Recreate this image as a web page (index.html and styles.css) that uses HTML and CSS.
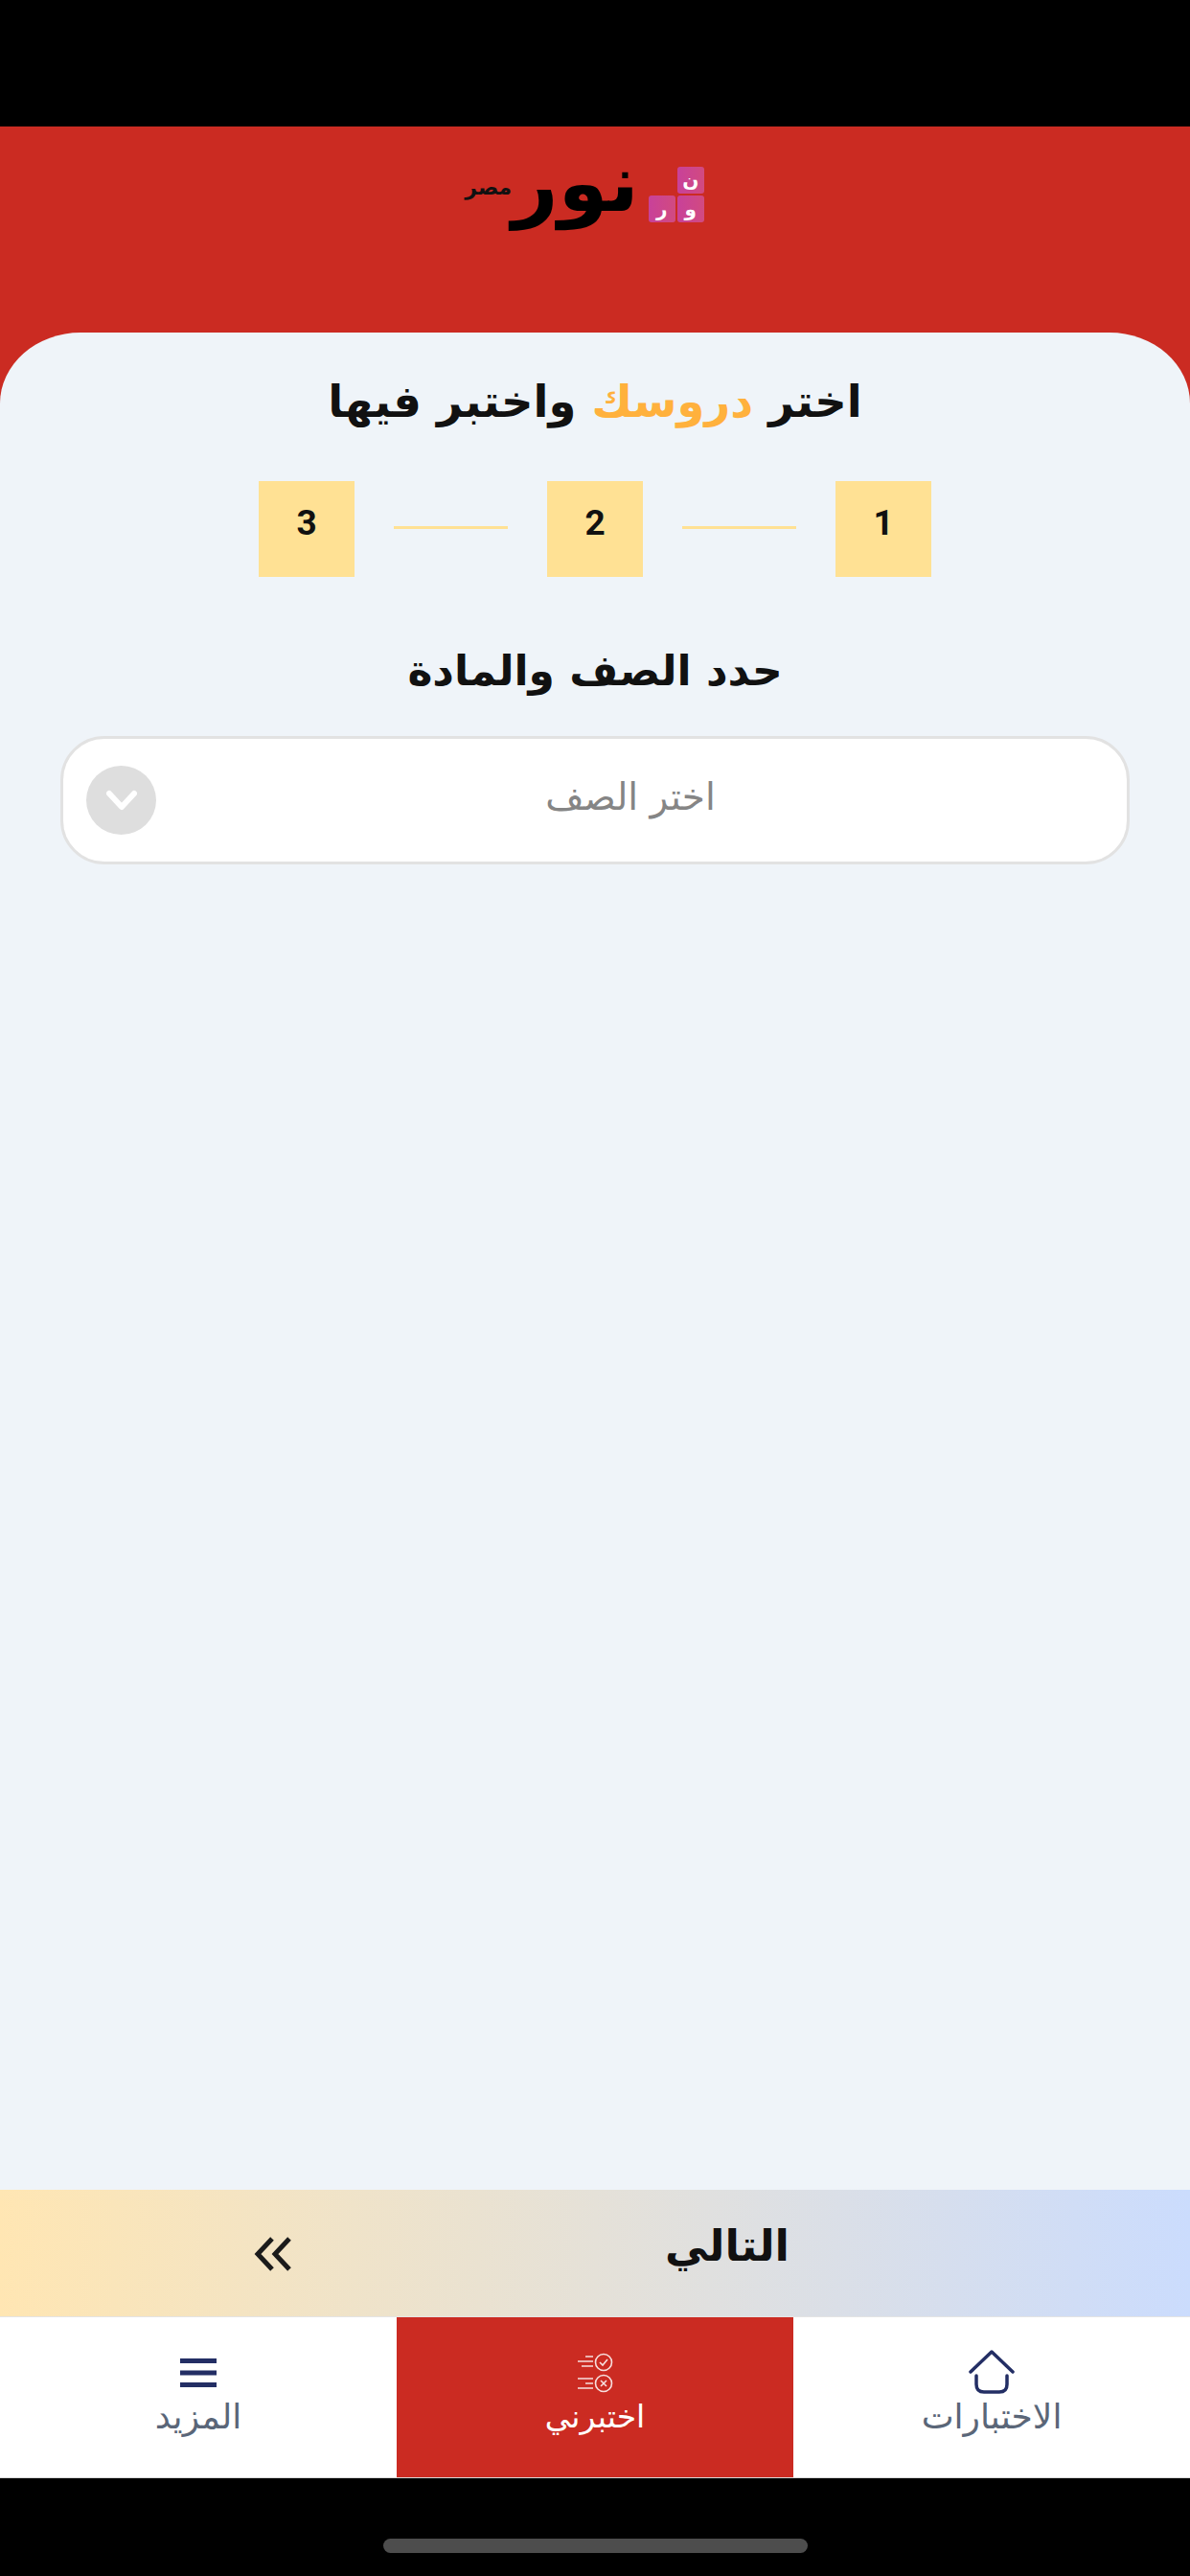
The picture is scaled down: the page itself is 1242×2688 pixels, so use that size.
FILE: index.html
```html
<!DOCTYPE html>
<html lang="ar" dir="rtl">
<head>
  <meta charset="UTF-8">
  <meta name="viewport" content="width=device-width, initial-scale=1.0">
  <title>نور مصر</title>
  <link rel="stylesheet" href="styles.css">
</head>
<body>
  <div class="status-bar"></div>
  <div class="red-area">
    <header class="header">
      <div class="logo" dir="ltr">
        <span class="logo-small">مصر</span>
        <span class="logo-name">نور</span>
        <div class="tiles">
          <span class="tile tile-empty"></span>
          <span class="tile">ن</span>
          <span class="tile">ر</span>
          <span class="tile">و</span>
        </div>
      </div>
    </header>
    <main class="card">
      <h1 class="title">اختر <span class="accent">دروسك</span> واختبر فيها</h1>
      <div class="steps">
        <div class="step">1</div>
        <div class="step-line"></div>
        <div class="step">2</div>
        <div class="step-line"></div>
        <div class="step">3</div>
      </div>
      <h2 class="subtitle">حدد الصف والمادة</h2>
      <div class="select">
        <span class="select-text">اختر الصف</span>
        <span class="select-arrow">
          <svg width="36" height="24" viewBox="0 0 36 24"><path d="M5 5 L18 19 L31 5" fill="none" stroke="#fff" stroke-width="6" stroke-linecap="round" stroke-linejoin="round"/></svg>
        </span>
      </div>
    </main>
  </div>
  <div class="next-bar">
    <span class="next-text">التالي</span>
    <svg class="next-icon" width="42" height="36" viewBox="0 0 42 36"><path d="M20 2 L5 18 L20 34 M38 2 L23 18 L38 34" fill="none" stroke="#1b1b1b" stroke-width="5"/></svg>
  </div>
  <nav class="tabs">
    <div class="tab">
      <svg class="tab-icon" width="50" height="46" viewBox="0 0 50 46"><path d="M3 23 L25 2 L47 23 M9 27 V36 Q9 44 17 44 H33 Q41 44 41 36 V27" fill="none" stroke="#232e64" stroke-width="3.5" stroke-linecap="round" stroke-linejoin="round"/></svg>
      <span>الاختبارات</span>
    </div>
    <div class="tab tab-active">
      <svg class="tab-icon" width="40" height="46" viewBox="0 -3 40 46"><g fill="none" stroke="#fff" stroke-width="1.6" opacity="0.85"><circle cx="29" cy="10" r="8.5"/><path d="M25 10 L28 13 L33 7"/><circle cx="29" cy="32" r="8.5"/><path d="M26 29 L32 35 M32 29 L26 35"/><path d="M10 4 H18 M2 9 H18 M6 14 H18 M2 27 H18 M10 32 H18 M2 37 H18"/></g></svg>
      <span>اختبرني</span>
    </div>
    <div class="tab">
      <svg class="tab-icon" width="40" height="46" viewBox="0 0 40 46"><path d="M1 11.5 H39 M1 24 H39 M1 36.5 H39" stroke="#232e64" stroke-width="5"/></svg>
      <span>المزيد</span>
    </div>
  </nav>
  <div class="home-area">
    <div class="home-indicator"></div>
  </div>
</body>
</html>
```

FILE: styles.css
```css
* {
  box-sizing: border-box;
}

body {
  margin: 0;
  width: 1242px;
  height: 2688px;
  display: flex;
  flex-direction: column;
  background: #000;
  font-family: "DejaVu Sans", sans-serif;
  overflow: hidden;
}

.status-bar {
  height: 132px;
  background: #000;
}

.red-area {
  flex: 1;
  display: flex;
  flex-direction: column;
  background: #cb2b22;
}

.header {
  height: 215px;
  padding-top: 20px;
}

.logo {
  display: flex;
  align-items: center;
  justify-content: center;
  height: 78px;
  padding-right: 22px;
}

.logo-small {
  font-size: 22px;
  font-weight: bold;
  color: #111;
  margin-top: 8px;
}

.logo-name {
  font-size: 84px;
  font-weight: bold;
  line-height: 78px;
  color: #000;
  margin-right: 10px;
}

.tiles {
  display: grid;
  grid-template-columns: 28px 28px;
  grid-auto-rows: 28px;
  gap: 2px;
  margin-top: 24px;
}

.tile {
  display: flex;
  align-items: center;
  justify-content: center;
  background: linear-gradient(90deg, #c8419a, #d24a80);
  border-radius: 3px;
  color: #fff;
  font-size: 20px;
  font-weight: bold;
  line-height: 1;
}

.tile-empty {
  background: none;
}

.card {
  flex: 1;
  background: #eff4f9;
  border-radius: 84px 84px 0 0 / 74px 74px 0 0;
  padding-top: 40px;
}

.title {
  margin: 0;
  text-align: center;
  font-size: 46.5px;
  line-height: 64px;
  font-weight: bold;
  color: #111;
}

.accent {
  color: #ffb13d;
}

.steps {
  display: flex;
  align-items: center;
  justify-content: center;
  margin-top: 51px;
  gap: 41px;
}

.step {
  width: 100px;
  height: 100px;
  padding-top: 19px;
  background: #ffe194;
  text-align: center;
  font-family: Roboto, sans-serif;
  font-weight: bold;
  font-size: 37px;
  line-height: 50px;
  color: #111;
}

.step-line {
  width: 119px;
  height: 3px;
  margin-bottom: 4px;
  background: #ffe194;
}

.subtitle {
  margin: 68px 0 0;
  text-align: center;
  font-size: 44px;
  line-height: 60px;
  font-weight: bold;
  color: #111;
}

.select {
  position: relative;
  display: flex;
  align-items: center;
  justify-content: center;
  width: 1116px;
  height: 134px;
  margin: 38px auto 0;
  padding-bottom: 8px;
  padding-left: 74px;
  background: #fff;
  border: 3px solid #e2e2e2;
  border-radius: 46px;
}

.select-text {
  font-size: 39px;
  color: #858585;
}

.select-arrow {
  position: absolute;
  left: 24px;
  top: 28px;
  width: 73px;
  height: 72px;
  display: flex;
  align-items: center;
  justify-content: center;
  border-radius: 50%;
  background: #dedede;
}

.next-bar {
  position: relative;
  height: 132px;
  display: flex;
  align-items: center;
  justify-content: center;
  padding-left: 276px;
  background: linear-gradient(90deg, #ffe6b3, #cbdcfd);
}

.next-text {
  font-size: 45px;
  font-weight: bold;
  color: #111;
  margin-bottom: 16px;
}

.next-icon {
  position: absolute;
  left: 264px;
  top: 49px;
}

.tabs {
  height: 169px;
  display: grid;
  grid-template-columns: 1fr 1fr 1fr;
  background: #fff;
  border-top: 1px solid #e4e4e4;
  border-bottom: 1px solid #d8d8d8;
}

.tab {
  display: flex;
  flex-direction: column;
  align-items: center;
  padding-top: 34px;
  color: #5a6678;
  font-size: 36px;
  line-height: 44px;
}

.tab-icon {
  height: 46px;
  margin-bottom: 2px;
}

.tab-active {
  background: #cb2b22;
  color: #fff;
  font-size: 33px;
}

.home-area {
  height: 102px;
  background: #000;
  padding-top: 63px;
}

.home-indicator {
  width: 443px;
  height: 15px;
  margin: 0 auto;
  border-radius: 8px;
  background: #4d4d4d;
}
```
